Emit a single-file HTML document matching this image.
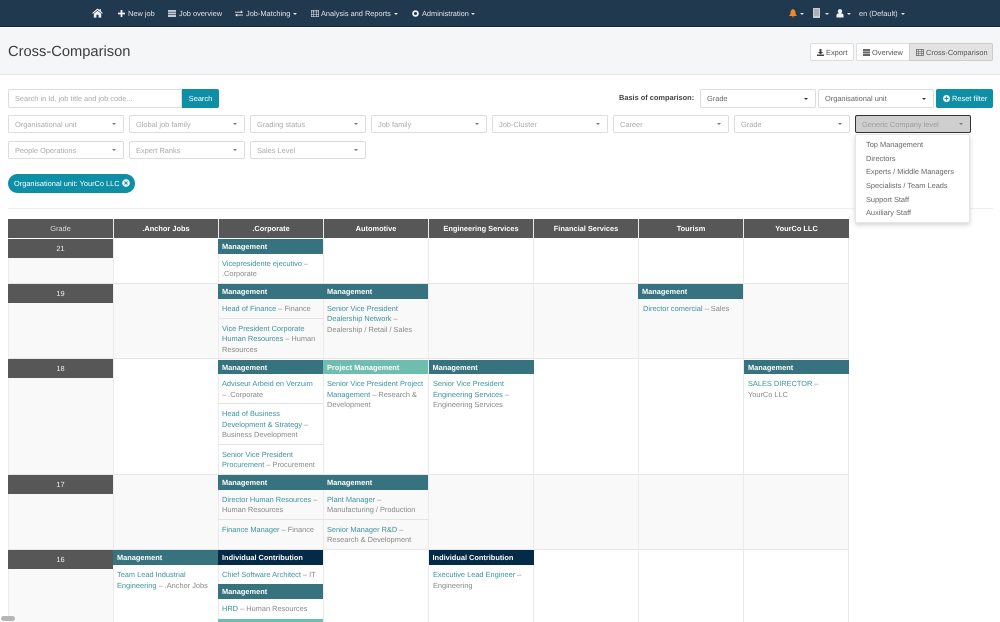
<!DOCTYPE html>
<html><head><meta charset="utf-8"><style>
*{box-sizing:border-box}
html,body{margin:0;padding:0;width:1000px;height:622px;overflow:hidden;background:#fff;font-family:"Liberation Sans",sans-serif;font-size:7.4px;color:#555;text-rendering:geometricPrecision}
#w{position:relative;width:1000px;height:622px;overflow:hidden;filter:blur(.25px)}
.a{position:absolute;white-space:nowrap}
.nav{left:0;top:0;width:1000px;height:27px;background:#20394f;border-bottom:1px solid #16293a}
.n{top:9px;color:#dfe5ea;font-size:7.4px;line-height:10px}
.car{position:absolute;width:0;height:0;border-left:2.2px solid transparent;border-right:2.2px solid transparent;border-top:2.2px solid currentColor}
.sel{position:absolute;height:18px;background:#fff;border:1px solid #ddd;border-radius:2px;color:#aaa;line-height:17.5px;padding-left:6px;font-size:7.4px;width:116px}
.sel i{position:absolute;right:7px;top:7px;width:0;height:0;border-left:2.2px solid transparent;border-right:2.2px solid transparent;border-top:2.2px solid #777}
.bt{position:absolute;height:18px;border:1px solid #ddd;background:#fff;border-radius:2px;line-height:16px;color:#555;font-size:7.4px;white-space:nowrap}
.hd{position:absolute;top:219px;height:19px;background:#575757;color:#fff;font-weight:bold;text-align:center;line-height:19px;font-size:7.4px;width:104px}
.g{position:absolute;left:8px;width:105px;height:19px;background:#575757;color:#eee;text-align:center;line-height:19px;font-size:7.4px}
.row{position:absolute;left:8px;width:841px}
.vl{position:absolute;top:219px;width:1px;height:403px;background:#ebebeb}
.b{position:absolute;width:105px;height:14.5px;color:#fff;font-weight:bold;line-height:15px;padding-left:4px;font-size:7.4px;white-space:nowrap}
.m{background:#37737e}.p{background:#6fbdaf}.ic{background:#032a46}
.t{position:absolute;line-height:10.4px;font-size:7.4px;color:#888;white-space:nowrap;margin-top:.7px}
.t a{color:#3a929f}
.sep{position:absolute;width:105px;height:1px;background:#e4e4e4}
.dd{position:absolute;left:866px;white-space:nowrap;color:#666;font-size:7.4px;line-height:10px;margin-top:.5px}
</style></head><body><div id="w">
<div class="a nav"></div>
<svg class="a" style="left:92px;top:8px" width="11" height="10" viewBox="0 0 11 10"><path d="M5.500 0.500L0.200 5l.7.800L5.500 2l4.600 3.800.7-.8-2-1.700V1H7.600v1.100zM1.800 5.800V9.600h2.600V6.800h2.200v2.800h2.600V5.800L5.500 2.800z" fill="#eef1f3"/></svg>
<svg class="a" style="left:118px;top:10px" width="7" height="7"><path d="M2.600 0h1.800v2.600H7v1.800H4.400V7H2.600V4.400H0V2.600h2.600z" fill="#eef1f3"/></svg>
<div class="a n" style="left:128px">New job</div>
<svg class="a" style="left:168px;top:10px" width="8" height="7"><rect width="8" height="7" fill="#c4ccd2"/><path d="M0 2.200h8M0 4.600h8" stroke="#20394f" stroke-width=".6"/></svg>
<div class="a n" style="left:179px">Job overview</div>
<svg class="a" style="left:235px;top:10px" width="8" height="7"><path d="M0 1.700h5.800V.3L8 2.200 5.800 3.200V2.600H0zM8 4.600H2.200V3.800L0 5 2.200 6.800V5.500H8z" fill="#e4e9ec"/></svg>
<div class="a n" style="left:246px">Job-Matching</div><div class="car" style="left:293px;top:13px;color:#dfe5ea"></div>
<svg class="a" style="left:311px;top:10px" width="8" height="7"><rect x=".3" y=".3" width="7.400" height="6.400" fill="none" stroke="#c9d0d5" stroke-width=".7"/><path d="M0 2h8M2.700 0v7M5.300 0v7M0 4.400h8" stroke="#c9d0d5" stroke-width=".6"/></svg>
<div class="a n" style="left:321px">Analysis and Reports</div><div class="car" style="left:394px;top:13px;color:#dfe5ea"></div>
<svg class="a" style="left:412px;top:10px" width="7" height="7"><circle cx="3.500" cy="3.500" r="2.400" fill="none" stroke="#eef1f3" stroke-width="1.800"/></svg>
<div class="a n" style="left:422px">Administration</div><div class="car" style="left:471px;top:13px;color:#dfe5ea"></div>
<svg class="a" style="left:789px;top:9px" width="8" height="9"><path d="M4 0C2.200.8 1.500 2 1.500 3.800 1.500 5.300.8 6 0 7h8C7.200 6 6.500 5.300 6.500 3.800 6.500 2 5.800.8 4 0zM3 7.400h2L4 8.800z" fill="#ee8a23"/></svg>
<div class="car" style="left:800px;top:13px;color:#dfe5ea"></div>
<svg class="a" style="left:813px;top:8px" width="7" height="10"><rect width="7" height="10" rx=".6" fill="#c9d0d5"/><rect x="1" y="1" width="5" height="7" fill="#aab3ba"/></svg>
<div class="car" style="left:825px;top:13px;color:#dfe5ea"></div>
<svg class="a" style="left:836px;top:9px" width="8" height="9"><circle cx="4" cy="2.300" r="2.200" fill="#eef1f3"/><path d="M.5 8.500V6.300C.5 5 1.700 4.500 2.700 4.300h2.600C6.300 4.500 7.500 5 7.500 6.300V8.500z" fill="#eef1f3"/></svg>
<div class="car" style="left:847px;top:13px;color:#dfe5ea"></div>
<div class="a n" style="left:859px">en (Default)</div><div class="car" style="left:901px;top:13px;color:#dfe5ea"></div>

<div class="a" style="left:0;top:28px;width:1000px;height:47px;background:#f5f6f7;border-bottom:1px solid #e5e5e5"></div>
<div class="a" style="left:8px;top:42.500px;font-size:14.700px;line-height:19px;color:#3c3c3c">Cross-Comparison</div>
<div class="bt" style="left:810px;top:43px;width:44px;padding-left:6px;line-height:17px"><svg width="7" height="7" style="vertical-align:-0.5px"><path d="M2.500 0h2v3h1.800L3.500 5.400.7 3h1.800zM0 5.500h7V7H0z" fill="#444"/></svg> Export</div>
<div class="bt" style="left:856px;top:43px;width:54px;padding-left:6px;line-height:17px;border-radius:2px 0 0 2px"><svg width="7" height="7" style="vertical-align:-0.5px"><rect width="7" height="7" fill="#666"/><path d="M0 2.200h7M0 4.500h7" stroke="#fff" stroke-width=".5"/></svg> Overview</div>
<div class="bt" style="left:909px;top:43px;width:84px;padding-left:6px;line-height:17px;background:#e3e3e3;border-color:#ccc;border-radius:0 2px 2px 0"><svg width="8" height="7" style="vertical-align:-0.5px"><rect x=".3" y=".3" width="7" height="6.400" fill="none" stroke="#555" stroke-width=".7"/><path d="M0 2.300h8M0 4.500h8M2.700 0v7M5.300 0v7" stroke="#555" stroke-width=".5"/></svg> Cross-Comparison</div>

<div class="sel" style="left:8px;top:89px;width:174px;height:19px;line-height:17px;border-radius:2px 0 0 2px">Search in Id, job title and job code...</div>
<div class="a" style="left:182px;top:89px;width:37px;height:19px;background:#0e8fa6;color:#fff;text-align:center;line-height:19px;border-radius:0 2px 2px 0">Search</div>
<div class="a" style="left:619px;top:93px;font-weight:bold;color:#444;line-height:10px">Basis of comparison:</div>
<div class="sel" style="left:700px;top:89px;height:19px;line-height:17px;color:#666">Grade<i style="border-top-color:#333;top:8px"></i></div>
<div class="sel" style="left:818px;top:89px;height:19px;line-height:17px;color:#666">Organisational unit<i style="border-top-color:#333;top:8px"></i></div>
<div class="a" style="left:936px;top:89px;width:57px;height:19px;background:#0e8fa6;color:#fff;line-height:19px;border-radius:2px;padding-left:7px"><svg width="7" height="7" style="vertical-align:-0.5px"><circle cx="3.500" cy="3.500" r="3.500" fill="#fff"/><path d="M3.500 1.500v4M1.500 3.500h4" stroke="#0e8fa6"/></svg> Reset filter</div>

<div class="sel" style="left:8px;top:115px">Organisational unit<i></i></div>
<div class="sel" style="left:129px;top:115px">Global job family<i></i></div>
<div class="sel" style="left:250px;top:115px">Grading status<i></i></div>
<div class="sel" style="left:371px;top:115px">Job family<i></i></div>
<div class="sel" style="left:492px;top:115px">Job-Cluster<i></i></div>
<div class="sel" style="left:613px;top:115px">Career<i></i></div>
<div class="sel" style="left:734px;top:115px">Grade<i></i></div>
<div class="sel" style="left:855px;top:115px;background:#cfcfcf;border-color:#333;color:#9a9a9a">Generic Company level<i></i></div>
<div class="sel" style="left:8px;top:141px">People Operations<i></i></div>
<div class="sel" style="left:129px;top:141px">Expert Ranks<i></i></div>
<div class="sel" style="left:250px;top:141px">Sales Level<i></i></div>

<div class="a" style="left:8px;top:174px;width:127px;height:19px;background:#0e8fa6;border-radius:10px;color:#fff;line-height:19px;padding-left:6px">Organisational unit: YourCo LLC <svg width="8" height="8" style="vertical-align:-1px"><circle cx="4" cy="4" r="3.800" fill="#fff"/><path d="M2.500 2.500l3 3M5.500 2.500l-3 3" stroke="#0e8fa6" stroke-width="1.100"/></svg></div>
<div class="a" style="left:8px;top:208px;width:985px;height:1px;background:#f0f0f0"></div>

<div class="row" style="top:239px;height:45px;background:#fff"></div>
<div class="row" style="top:284px;height:75px;background:#f9f9f9"></div>
<div class="row" style="top:359px;height:116px;background:#fff"></div>
<div class="row" style="top:475px;height:75px;background:#f9f9f9"></div>
<div class="row" style="top:550px;height:72px;background:#fff"></div>
<div class="a" style="left:8px;top:239px;width:105px;height:45px;background:#f9f9f9"></div>
<div class="a" style="left:8px;top:359px;width:105px;height:116px;background:#f9f9f9"></div>
<div class="a" style="left:8px;top:550px;width:105px;height:72px;background:#f9f9f9"></div>
<div class="a" style="left:8px;top:283px;width:841px;height:1px;background:#e6e6e6"></div>
<div class="a" style="left:8px;top:358px;width:841px;height:1px;background:#e6e6e6"></div>
<div class="a" style="left:8px;top:474px;width:841px;height:1px;background:#e6e6e6"></div>
<div class="a" style="left:8px;top:549px;width:841px;height:1px;background:#e6e6e6"></div>
<div class="vl" style="left:8px"></div><div class="vl" style="left:113px"></div><div class="vl" style="left:218px"></div><div class="vl" style="left:323px"></div><div class="vl" style="left:428px"></div><div class="vl" style="left:533px"></div><div class="vl" style="left:638px"></div><div class="vl" style="left:743px"></div><div class="vl" style="left:848px"></div>

<div class="hd" style="left:8px;width:105px;font-weight:normal;color:#ddd">Grade</div>
<div class="hd" style="left:114px">.Anchor Jobs</div>
<div class="hd" style="left:219px">.Corporate</div>
<div class="hd" style="left:324px">Automotive</div>
<div class="hd" style="left:429px">Engineering Services</div>
<div class="hd" style="left:534px">Financial Services</div>
<div class="hd" style="left:639px">Tourism</div>
<div class="hd" style="left:744px;width:105px">YourCo LLC</div>

<div class="g" style="top:239px">21</div>
<div class="g" style="top:284px">19</div>
<div class="g" style="top:359px">18</div>
<div class="g" style="top:475px">17</div>
<div class="g" style="top:550px">16</div>

<div class="b m" style="left:218px;top:239px">Management</div>
<div class="t" style="left:222px;top:258px"><a>Vicepresidente ejecutivo</a> –<br>.Corporate</div>

<div class="b m" style="left:218px;top:284px">Management</div>
<div class="t" style="left:222px;top:303px"><a>Head of Finance</a> – Finance</div>
<div class="sep" style="left:218px;top:318px"></div>
<div class="t" style="left:222px;top:323px"><a>Vice President Corporate<br>Human Resources</a> – Human<br>Resources</div>
<div class="b m" style="left:323px;top:284px">Management</div>
<div class="t" style="left:327px;top:303px"><a>Senior Vice President<br>Dealership Network</a> –<br>Dealership / Retail / Sales</div>
<div class="b m" style="left:638px;top:284px">Management</div>
<div class="t" style="left:643px;top:303px"><a>Director comercial</a> – Sales</div>

<div class="b m" style="left:218px;top:359.500px">Management</div>
<div class="t" style="left:222px;top:378.500px"><a>Adviseur Arbeid en Verzuim</a><br>– .Corporate</div>
<div class="sep" style="left:218px;top:403px"></div>
<div class="t" style="left:222px;top:408.500px"><a>Head of Business<br>Development &amp; Strategy</a> –<br>Business Development</div>
<div class="sep" style="left:218px;top:444px"></div>
<div class="t" style="left:222px;top:449px"><a>Senior Vice President<br>Procurement</a> – Procurement</div>
<div class="b p" style="left:323px;top:359.500px">Project Management</div>
<div class="t" style="left:327px;top:378.500px"><a>Senior Vice President Project<br>Management</a> – Research &amp;<br>Development</div>
<div class="b m" style="left:428.500px;top:359.500px">Management</div>
<div class="t" style="left:433px;top:378.500px"><a>Senior Vice President<br>Engineering Services</a> –<br>Engineering Services</div>
<div class="b m" style="left:744px;top:359.500px">Management</div>
<div class="t" style="left:748px;top:378.500px"><a>SALES DIRECTOR</a> –<br>YourCo LLC</div>

<div class="b m" style="left:218px;top:475px">Management</div>
<div class="t" style="left:222px;top:494px"><a>Director Human Resources</a> –<br>Human Resources</div>
<div class="sep" style="left:218px;top:519px"></div>
<div class="t" style="left:222px;top:524px"><a>Finance Manager</a> – Finance</div>
<div class="b m" style="left:323px;top:475px">Management</div>
<div class="t" style="left:327px;top:494px"><a>Plant Manager</a> –<br>Manufacturing / Production</div>
<div class="sep" style="left:323px;top:519px"></div>
<div class="t" style="left:327px;top:524px"><a>Senior Manager R&amp;D</a> –<br>Research &amp; Development</div>

<div class="b m" style="left:113px;top:550px">Management</div>
<div class="t" style="left:117px;top:569.500px"><a>Team Lead Industrial<br>Engineering</a> – .Anchor Jobs</div>
<div class="b ic" style="left:218px;top:550px">Individual Contribution</div>
<div class="t" style="left:222px;top:569.500px"><a>Chief Software Architect</a> – IT</div>
<div class="b m" style="left:218px;top:584px">Management</div>
<div class="t" style="left:222px;top:603.500px"><a>HRD</a> – Human Resources</div>
<div class="b p" style="left:218px;top:618.500px;height:3.500px"></div>
<div class="b ic" style="left:428.500px;top:550px">Individual Contribution</div>
<div class="t" style="left:433px;top:569.500px"><a>Executive Lead Engineer</a> –<br>Engineering</div>

<div class="a" style="left:855px;top:134px;width:115px;height:89px;background:#fff;border:1px solid #e6e6e6;border-radius:2px;box-shadow:0 2px 5px rgba(0,0,0,.18)"></div>
<div class="dd" style="top:139px">Top Management</div>
<div class="dd" style="top:153px">Directors</div>
<div class="dd" style="top:166.500px">Experts / Middle Managers</div>
<div class="dd" style="top:180px">Specialists / Team Leads</div>
<div class="dd" style="top:194px">Support Staff</div>
<div class="dd" style="top:207.500px">Auxiliary Staff</div>

<div class="a" style="left:1px;top:616px;width:14px;height:5px;border-radius:3px;background:#b5b5b5"></div>
</div></body></html>
